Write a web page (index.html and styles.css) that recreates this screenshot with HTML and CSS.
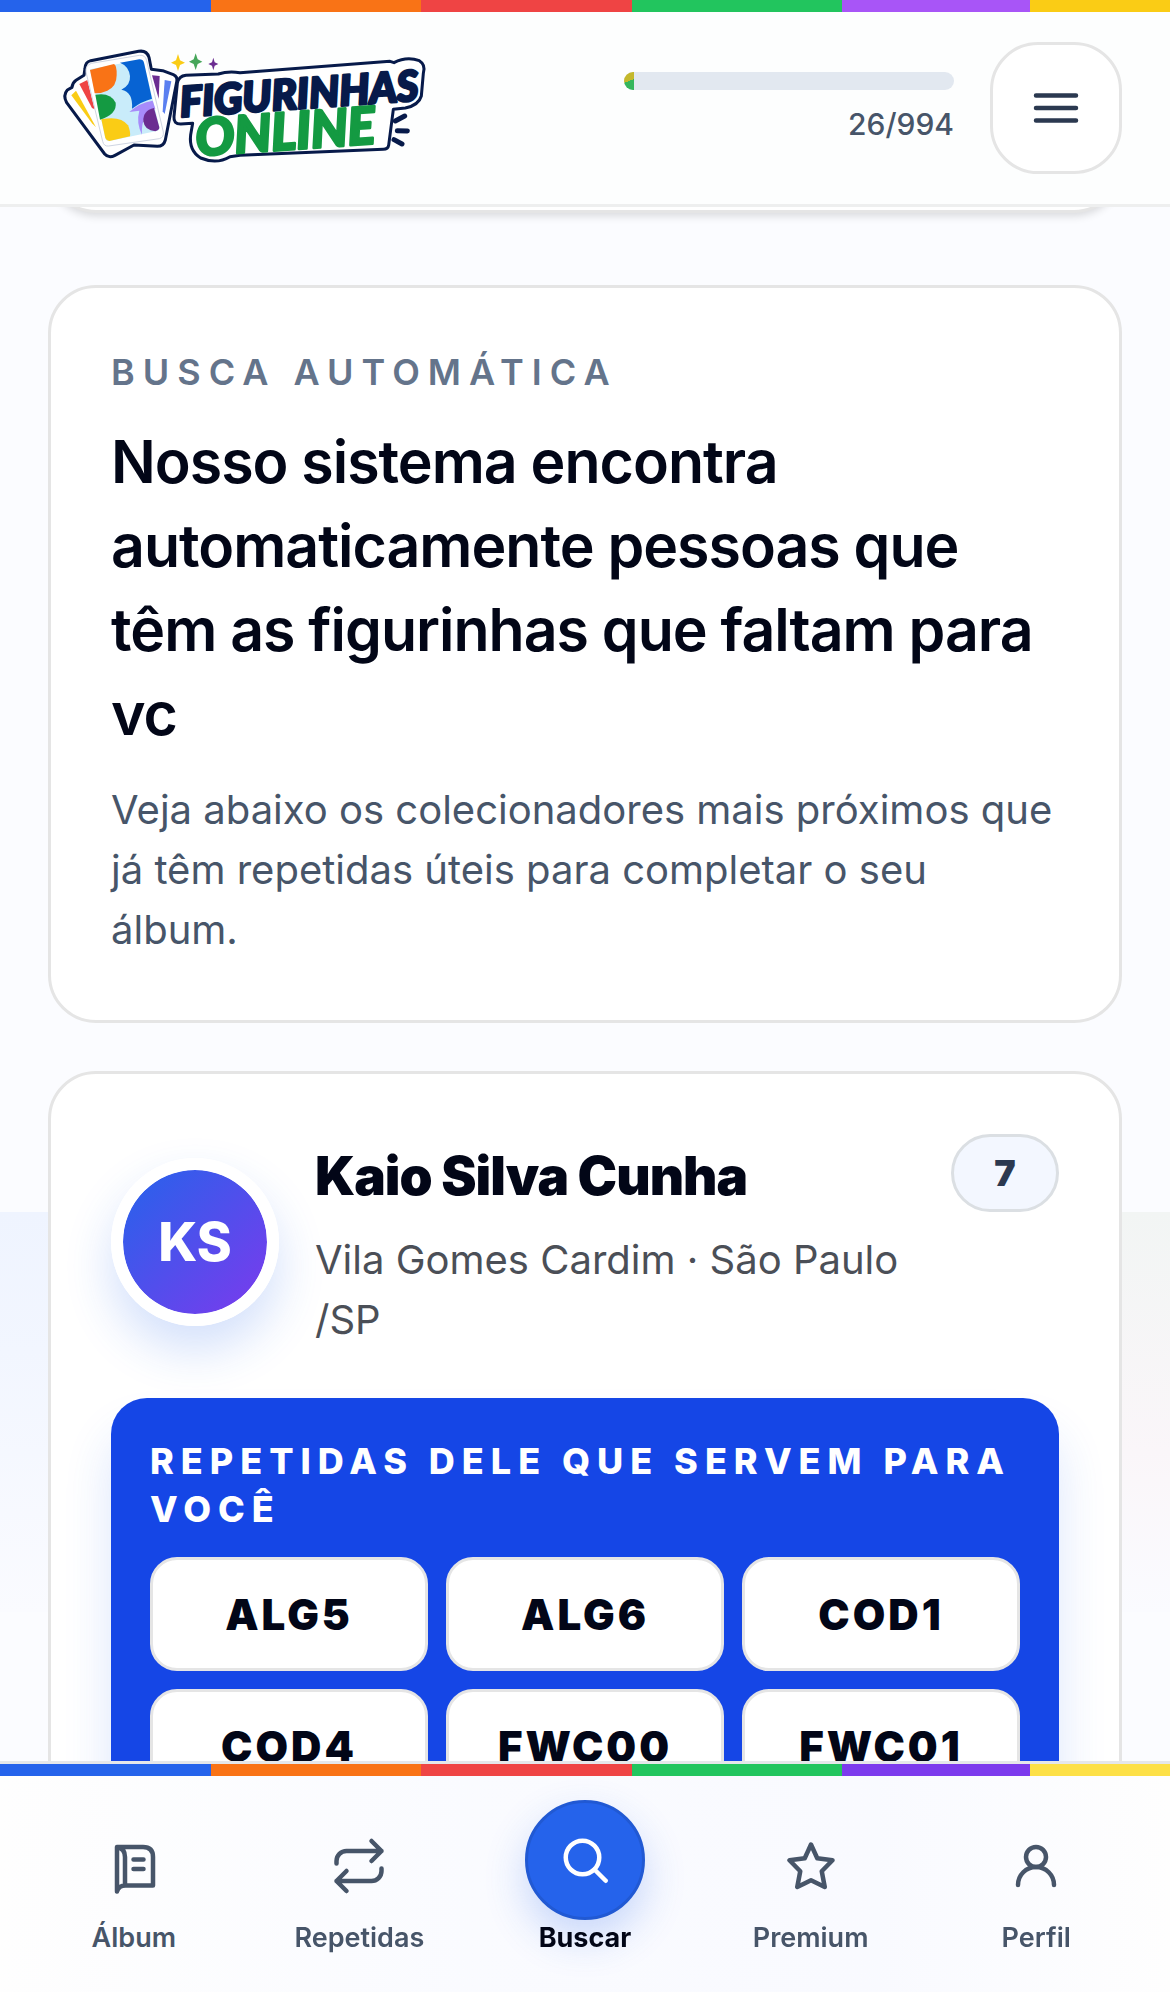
FILE: index.html
```html
<!DOCTYPE html>
<html lang="pt-BR">
<head>
<meta charset="utf-8">
<meta name="viewport" content="width=device-width, initial-scale=1">
<title>Figurinhas Online</title>
<link rel="stylesheet" href="styles.css">
</head>
<body>
<header class="topbar">
  <div class="rainbow rainbow-top"></div>
  <div class="topbar-row">
    <a class="brand" href="#" aria-label="Figurinhas Online">
      <svg class="logo" viewBox="0 0 1188 432" aria-hidden="true">
        <g transform="translate(36 12)">
          <path class="logo-edge" d="M22 150 L36 142 Q38 128 48 121 L72 106 L75 85 Q76 66 92 62 L236 34 Q260 30 267 52 L274 88 L308 92 L340 104 Q354 110 350 126 L316 300 Q311 319 292 319 L222 315 L165 346 Q146 356 134 342 L20 188 Q8 166 22 150Z"/>
          <path fill="#facc15" d="M34 166 48 152 108 262 96 250Z"/>
          <path fill="#ef4444" d="M58 132 82 120 104 208 96 204Z"/>
          <path fill="#6b2c91" d="M276 106 299 108 296 176Z"/>
          <path fill="#5b7ff0" d="M314 120 334 124 314 222 308 214Z"/>
          <path class="logo-sheet" d="M94 70 238 46Q256 44 260 62L310 276Q312 292 298 296L146 318Q132 320 128 304L78 96Q76 76 94 70Z"/>
          <path fill="#c9ecfa" d="M90 88 238 60Q249 60 252 70L298 260Q300 270 290 273L148 303Q138 304 136 294Z"/>
          <path fill="#f97316" d="M90 90 162 72Q171 76 170 106Q170 140 142 152Q126 160 104 160Z"/>
          <path fill="#0763d3" d="M180 68 238 58Q249 58 252 68L276 176Q245 184 216 206Q220 156 184 149Q212 136 210 108Q206 78 180 68Z"/>
          <path fill="#a78bfa" d="M208 216Q238 188 278 182L286 206Q242 220 246 284Q228 248 238 212Z"/>
          <path fill="#6b2c91" d="M282 204 298 262Q299 270 286 274Q254 272 250 244Q248 212 282 204Z"/>
          <path fill="#149a42" d="M106 164Q152 156 167 188Q172 222 120 239Z"/>
          <path fill="#facc15" d="M124 238Q182 226 204 256Q212 274 210 289L148 303Q140 303 136 294Z"/>
        </g>
        <g transform="translate(336 12)">
          <path fill="#facc15" d="m54 42 6 19 15 7-15 7-6 18-6-18-15-7 15-7Z"/>
          <path fill="#46a65a" d="m107 40 6 18 14 7-14 7-6 18-6-18-14-7 14-7Z"/>
          <path fill="#6b2c91" d="m160 53 4 14 11 5-11 5-4 14-4-14-11-5 11-5Z"/>
          <path class="logo-edge" d="M52 130 Q56 108 78 106 L175 102 Q205 92 240 98 L690 64 L702 68 Q740 48 778 62 Q798 74 790 100 L784 168 Q776 196 736 204 L700 208 L686 316 Q684 328 670 328 L240 346 L210 350 Q170 374 122 354 Q86 332 92 284 L98 250 L62 252 Q40 252 42 230Z"/>
          <text class="logo-word logo-navy" transform="translate(62 231) rotate(-4)">FIGURINHAS</text>
          <text class="logo-word logo-green" transform="translate(110 348) rotate(-4)">ONLINE</text>
          <path class="logo-rays" d="M706 243 734 228M712 272 742 273M702 299 726 312"/>
        </g>
      </svg>
    </a>
    <div class="topbar-side">
      <div class="progress">
        <div class="progress-track"><div class="progress-fill"></div></div>
        <span class="progress-count">26/994</span>
      </div>
      <button class="menu-button" type="button" aria-label="Menu">
        <svg class="icon" viewBox="0 0 24 24"><path d="M4 7h16M4 12h16M4 17h16"/></svg>
      </button>
    </div>
  </div>
</header>

<main class="content">
  <section class="card card-previous"></section>

  <section class="card">
    <p class="eyebrow">Busca automática</p>
    <h1 class="title">Nosso sistema encontra automaticamente pessoas que têm as figurinhas que faltam para vc</h1>
    <p class="lead">Veja abaixo os colecionadores mais próximos que já têm repetidas úteis para completar o seu álbum.</p>
  </section>

  <article class="card">
    <div class="person">
      <div class="avatar">KS</div>
      <div class="person-text">
        <h2 class="person-name">Kaio Silva Cunha</h2>
        <p class="person-place">Vila Gomes Cardim · São Paulo /SP</p>
      </div>
      <span class="badge">7</span>
    </div>
    <div class="panel">
      <h3 class="panel-title">Repetidas dele que servem para você</h3>
      <ul class="chips">
        <li class="chip">ALG5</li>
        <li class="chip">ALG6</li>
        <li class="chip">COD1</li>
        <li class="chip">COD4</li>
        <li class="chip">FWC00</li>
        <li class="chip">FWC01</li>
      </ul>
    </div>
  </article>
</main>

<nav class="tabbar">
  <div class="rainbow rainbow-bottom"></div>
  <div class="tabs">
    <a class="tab" href="#">
      <span class="tab-icon"><svg class="icon" viewBox="0 0 24 24"><path d="M5.200 22.200V4.400H15.600Q19.600 4.400 19.600 8.400V19.800H8.600Q5.800 19.800 5.200 22.200M5.200 4.400Q8.400 5 8.400 8.400V19.800M11.800 9.400h4M11.800 13.200h4"/></svg></span>
      <span>Álbum</span>
    </a>
    <a class="tab" href="#">
      <span class="tab-icon"><svg class="icon" viewBox="0 0 24 24"><path d="m17 2 4 4-4 4M3 11v-1a4 4 0 0 1 4-4h14M7 22l-4-4 4-4M21 13v1a4 4 0 0 1-4 4H3"/></svg></span>
      <span>Repetidas</span>
    </a>
    <a class="tab tab-active" href="#" aria-current="page">
      <span class="tab-icon"><svg class="icon" viewBox="0 0 24 24"><circle cx="11" cy="11" r="6.700"/><path d="m15.800 15.800 4.500 4.500"/></svg></span>
      <span>Buscar</span>
    </a>
    <a class="tab" href="#">
      <span class="tab-icon"><svg class="icon" viewBox="0 0 24 24"><path d="m12 3.400 2.500 5.500 6.100.800-4.300 4.400 1.200 6.300-5.500-2.700-5.500 2.700 1.200-6.300-4.300-4.400 6.100-.800Z"/></svg></span>
      <span>Premium</span>
    </a>
    <a class="tab" href="#">
      <span class="tab-icon"><svg class="icon" viewBox="0 0 24 24"><circle cx="12" cy="8.400" r="4"/><path d="M4.800 19.600a7.200 7.200 0 0 1 14.400 0"/></svg></span>
      <span>Perfil</span>
    </a>
  </div>
</nav>
</body>
</html>
```
FILE: styles.css
```css
* {
  box-sizing: border-box;
}

body {
  margin: 0;
  min-height: 100vh;
  color: #020617;
  font-family: Inter, "Liberation Sans", sans-serif;
  background-color: #fbfcff;
  background-image:
    linear-gradient(#eff4ff, #f2f6ff 35%, #fafbff),
    linear-gradient(#f2f5f4, #faf6f9 60%, #fafbff);
  background-repeat: no-repeat;
  background-position: 0 1212px, 100% 1212px;
  background-size: 50% 400px;
}

h1, h2, h3, p, ul {
  margin: 0;
  padding: 0;
}

.icon {
  display: block;
  width: 60px;
  height: 60px;
  fill: none;
  stroke: currentColor;
  stroke-width: 1.8;
  stroke-linecap: round;
  stroke-linejoin: round;
}

.rainbow {
  height: 12px;
}

.rainbow-top {
  background: linear-gradient(90deg, #2563eb 18%, #f97316 18% 36%, #ef4444 36% 54%, #22c55e 54% 72%, #a855f7 72% 88%, #facc15 88%);
}

.rainbow-bottom {
  background: linear-gradient(90deg, #2563eb 18%, #f97316 18% 36%, #ef4444 36% 54%, #22c55e 54% 72%, #7c3aed 72% 88%, #fde047 88%);
}

.topbar {
  position: fixed;
  top: 0;
  left: 0;
  right: 0;
  z-index: 2;
  background: #fdfefe;
  border-bottom: 3px solid #eeefef;
}

.topbar-row {
  display: flex;
  align-items: center;
  justify-content: space-between;
  padding: 24px 48px;
}

.brand {
  display: block;
}

.logo {
  display: block;
  width: 396px;
  height: 144px;
}

.logo-edge {
  fill: #fff;
  stroke: #071a4a;
  stroke-width: 9;
  stroke-linejoin: round;
}

.logo-sheet {
  fill: #fff;
  stroke: #cfd5e2;
  stroke-width: 3;
}

.logo-rays {
  fill: none;
  stroke: #071a4a;
  stroke-width: 15;
  stroke-linecap: round;
}

.logo-word {
  font-family: Lato, sans-serif;
  font-weight: 900;
  font-style: italic;
  stroke-width: 8;
  stroke-linejoin: round;
}

.logo-navy {
  fill: #071a4a;
  stroke: #071a4a;
  font-size: 126px;
}

.logo-green {
  fill: #149a42;
  stroke: #149a42;
  font-size: 154px;
}

.topbar-side {
  display: flex;
  align-items: center;
  gap: 36px;
}

.progress {
  display: flex;
  flex-direction: column;
  gap: 12px;
  width: 330px;
  padding-top: 2px;
}

.progress-track {
  height: 18px;
  overflow: hidden;
  border-radius: 9px;
  background: #e2e8f0;
}

.progress-fill {
  width: 3%;
  height: 100%;
  background: linear-gradient(160deg, #c4b82c 50%, #35b65c 50%);
}

.progress-count {
  color: #475569;
  font-size: 30px;
  font-weight: 500;
  line-height: 45px;
  text-align: right;
}

.menu-button {
  display: grid;
  place-items: center;
  width: 132px;
  height: 132px;
  padding: 0;
  border: 3px solid #e5e5e5;
  border-radius: 48px;
  background: #fff;
  color: #2b3950;
}

.content {
  display: flex;
  flex-direction: column;
  gap: 48px;
  padding: 0 48px 84px;
}

.card {
  padding: 60px;
  border: 3px solid #e5e5e5;
  border-radius: 48px;
  background: #fff;
}

.card-previous {
  min-height: 213px;
  margin-bottom: 24px;
  box-shadow: 0 3px 9px rgba(0, 0, 0, 0.14);
}

.eyebrow {
  color: #64748b;
  font-size: 36px;
  font-weight: 600;
  letter-spacing: 8px;
  line-height: 48px;
  text-transform: uppercase;
}

.title {
  margin-top: 24px;
  font-size: 59px;
  font-weight: 600;
  letter-spacing: -1px;
  line-height: 84px;
}

.lead {
  margin-top: 24px;
  color: #475569;
  font-size: 40px;
  line-height: 60px;
}

.person {
  display: flex;
  align-items: center;
  gap: 36px;
}

.avatar {
  display: grid;
  place-items: center;
  flex: none;
  width: 168px;
  height: 168px;
  border: 12px solid #fff;
  border-radius: 50%;
  background: linear-gradient(135deg, #2563eb, #7c3aed) padding-box;
  box-shadow: 0 24px 48px rgba(37, 99, 235, 0.2);
  color: #fff;
  font-size: 53px;
  font-weight: 800;
}

.person-text {
  flex: 1;
}

.person-name {
  font-size: 53px;
  font-weight: 900;
  letter-spacing: -1px;
  line-height: 84px;
}

.person-place {
  margin-top: 12px;
  color: #4b4f57;
  font-size: 40px;
  line-height: 60px;
}

.badge {
  display: grid;
  place-items: center;
  align-self: flex-start;
  width: 108px;
  height: 78px;
  border: 3px solid #dbdfe3;
  border-radius: 39px;
  background: #f3f7ff;
  color: #2b3950;
  font-size: 36px;
  font-weight: 900;
}

.panel {
  margin-top: 48px;
  padding: 39px;
  border-radius: 36px;
  background: #1546e6;
  box-shadow: 0 36px 48px rgba(37, 99, 235, 0.16);
}

.panel-title {
  color: #fff;
  font-size: 36px;
  font-weight: 800;
  letter-spacing: 7px;
  line-height: 48px;
  text-transform: uppercase;
}

.chips {
  display: grid;
  grid-template-columns: repeat(3, 1fr);
  gap: 18px;
  margin-top: 24px;
  list-style: none;
}

.chip {
  display: grid;
  place-items: center;
  height: 114px;
  border: 3px solid #e5e5e5;
  border-radius: 27px;
  background: #fff;
  font-size: 42px;
  font-weight: 900;
  letter-spacing: 3px;
}

.tabbar {
  position: fixed;
  left: 0;
  right: 0;
  bottom: 0;
  z-index: 2;
  border-top: 3px solid #e5e7ea;
  background: linear-gradient(90deg, #fefefe, #fafbff 40%, #f9faff 75%, #fefefe);
}

.tabs {
  display: grid;
  grid-template-columns: repeat(5, 1fr);
  padding: 24px 21px 36px;
}

.tab {
  display: flex;
  flex-direction: column;
  align-items: center;
  justify-content: flex-end;
  color: #475569;
  font-size: 27px;
  font-weight: 600;
  line-height: 36px;
  text-decoration: none;
}

.tab-icon {
  display: grid;
  place-items: center;
  height: 108px;
}

.tab-active {
  color: #020617;
  font-weight: 700;
}

.tab-active .tab-icon {
  width: 120px;
  height: 120px;
  border: 3px solid #2159d3;
  border-radius: 50%;
  background: #2563eb;
  box-shadow: 0 18px 42px rgba(37, 99, 235, 0.24);
  color: #fff;
}
```
